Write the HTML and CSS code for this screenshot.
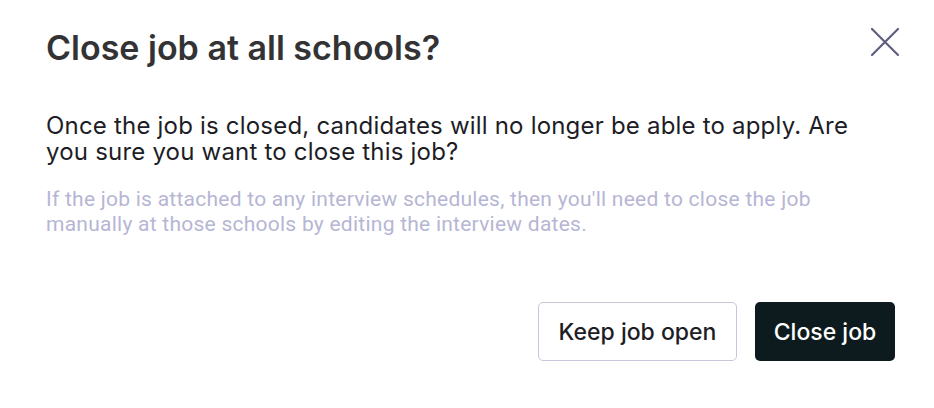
FILE: index.html
```html
<!DOCTYPE html>
<html lang="en">
<head>
<meta charset="UTF-8" />
<title>Close job</title>
<link rel="stylesheet" href="styles.css">
</head>
<body>

<div class="modal">
  <div class="modal-header">
    <h2 class="modal-title">Close job at all schools?</h2>
    <button class="close-btn" aria-label="Close">
      <svg width="30" height="30" viewBox="0 0 30 30">
        <path d="M2 2 L28 28 M28 2 L2 28" stroke="#5e5e80" stroke-width="2.2" stroke-linecap="round" fill="none"/>
      </svg>
    </button>
  </div>

  <p class="modal-text">Once the job is closed, candidates will no longer be able to apply. Are you sure you want to close this job?</p>
  <p class="modal-note">If the job is attached to any interview schedules, then you'll need to close the job manually at those schools by editing the interview dates.</p>

  <div class="modal-actions">
    <button class="btn btn-secondary">Keep job open</button>
    <button class="btn btn-primary">Close job</button>
  </div>
</div>

</body>
</html>
```

FILE: styles.css
```css
html, body {
  margin: 0;
  background: #fff;
  font-family: Inter, 'Noto Sans', sans-serif;
  color: #1f1f29;
}

.modal {
  width: 934px;
  height: 408px;
  box-sizing: border-box;
  padding: 27px 34px 0 46px;
}

.modal-header {
  display: flex;
  justify-content: space-between;
  align-items: flex-start;
}

.modal-title {
  margin: 1px 0 0;
  font-family: Inter, 'Liberation Sans', sans-serif;
  font-size: 34px;
  font-weight: 600;
  line-height: 40px;
  color: #333336;
}

.close-btn {
  border: none;
  background: none;
  padding: 0;
  cursor: pointer;
}

.modal-text {
  margin: 45px 0 0;
  font-size: 24px;
  line-height: 26px;
  letter-spacing: 0.2px;
  color: #1d1d26;
  max-width: 815px;
}

.modal-note {
  margin: 22px 0 0;
  font-family: Roboto, 'Liberation Sans', sans-serif;
  font-size: 21px;
  line-height: 25px;
  letter-spacing: 0.25px;
  color: #b6b6d4;
  max-width: 790px;
}

.modal-actions {
  display: flex;
  justify-content: flex-end;
  gap: 18px;
  margin-top: 65px;
  padding-right: 5px;
}

.btn {
  height: 59px;
  box-sizing: border-box;
  border-radius: 5px;
  font-family: Inter, sans-serif;
  font-size: 23px;
  font-weight: 500;
  cursor: pointer;
}

.btn-secondary {
  width: 199px;
  background: #fff;
  color: #1d1d26;
  border: 1px solid #c8c6dc;
}

.btn-primary {
  width: 140px;
  background: #0d1b1e;
  color: #fff;
  border: none;
}
```
